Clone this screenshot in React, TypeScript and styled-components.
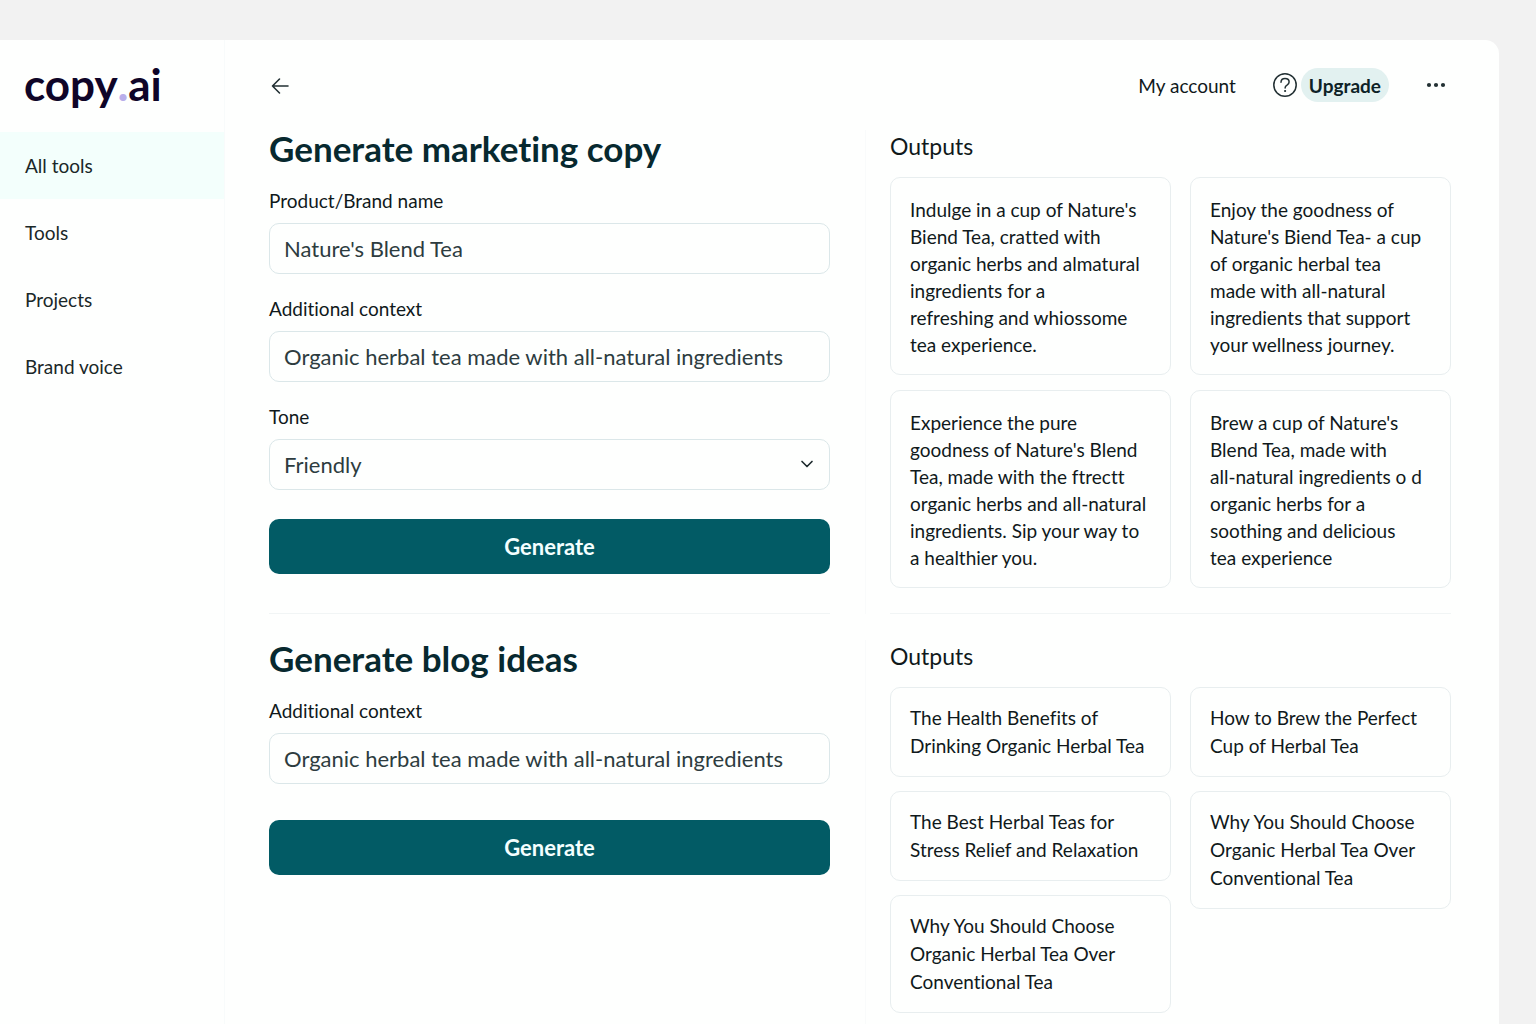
import React from "react";
import styled, { createGlobalStyle } from "styled-components";
import { ChevronDown } from "lucide-react";

const GlobalStyle = createGlobalStyle`
  *, *::before, *::after { box-sizing: border-box; }
  body {
    margin: 0;
    background: #f2f2f2;
    color: #10191b;
    font-family: Lato, "Liberation Sans", sans-serif;
    font-size: 19px;
    font-variant-ligatures: none;
  }
  button, input, select { font: inherit; color: inherit; }
  h1, h2, h3, p, ul { margin: 0; padding: 0; }
`;

const Page = styled.div`
  min-height: 100vh;
  padding: 40px 37px 0 0;
  display: flex;
`;

const Panel = styled.div`
  flex: 1;
  display: flex;
  background: #fefffe;
  border-radius: 0 14px 0 0;
`;

const Sidebar = styled.aside`
  flex: 0 0 225px;
  border-right: 1px solid #f8fbfb;
`;

const Logo = styled.a`
  display: block;
  height: 92px;
  padding: 16px 0 0 24px;
  color: #0f0528;
  font-size: 44px;
  font-weight: 700;
  line-height: 56px;
  text-decoration: none;
`;

const LogoDot = styled.span`
  color: #b9aeea;
  font-weight: 900;
`;

const NavList = styled.ul`
  list-style: none;
`;

const NavLink = styled.a<{ $active?: boolean }>`
  display: flex;
  align-items: center;
  height: 67px;
  padding-left: 25px;
  background: ${(p) => (p.$active ? "#f3fffc" : "transparent")};
  color: #1a2728;
  text-decoration: none;
`;

const Main = styled.main`
  flex: 1;
  min-width: 0;
  display: flex;
  flex-direction: column;
  padding: 0 48px 0 44px;
`;

const Header = styled.header`
  display: flex;
  align-items: center;
  justify-content: space-between;
  height: 90px;
  padding-right: 5px;
`;

const Actions = styled.div`
  display: flex;
  align-items: center;
  gap: 37px;
`;

const UpgradeGroup = styled.div`
  display: flex;
  align-items: center;
  gap: 4px;
`;

const AccountLink = styled.a`
  color: #10191b;
  text-decoration: none;
`;

const IconButton = styled.button`
  display: flex;
  padding: 0;
  border: 0;
  background: none;
  color: #223033;
  cursor: pointer;
`;

const UpgradeButton = styled.button`
  height: 34px;
  padding: 0 8px;
  min-width: 88px;
  border: 0;
  border-radius: 17px;
  background: #e2f1f0;
  color: #0d2226;
  font-weight: 700;
  cursor: pointer;
`;

const Section = styled.section<{ $follows?: boolean }>`
  display: flex;
  flex: ${(p) => (p.$follows ? "1 0 auto" : "0 0 auto")};
  padding-top: ${(p) => (p.$follows ? 26 : 0)}px;
`;

const Rule = styled.div`
  flex: 0 0 1px;
  margin: 0 24px 0 35px;
  background: #f9fbfb;
`;

const FormPane = styled.form<{ $ruled?: boolean }>`
  flex: 1 1 0;
  min-width: 0;
  padding-bottom: ${(p) => (p.$ruled ? 39 : 0)}px;
  border-bottom: ${(p) => (p.$ruled ? "1px solid #f1f5f5" : "0")};
`;

const OutputPane = styled.div<{ $ruled?: boolean }>`
  flex: 1 1 0;
  min-width: 0;
  border-bottom: ${(p) => (p.$ruled ? "1px solid #f1f5f5" : "0")};
`;

const Title = styled.h1`
  margin-bottom: 23px;
  color: #07292f;
  font-size: 35px;
  font-weight: 700;
  line-height: 36px;
`;

const Field = styled.div`
  display: flex;
  flex-direction: column;
  gap: 10px;

  & + & { margin-top: 23px; }
`;

const Label = styled.label`
  line-height: 24px;
`;

const TextInput = styled.input`
  width: 100%;
  height: 51px;
  padding: 0 14px;
  border: 1px solid #dbe7e9;
  border-radius: 10px;
  background: #fefffe;
  color: #2d3c3f;
  font-size: 22px;
`;

const SelectBox = styled.div`
  position: relative;
`;

const Select = styled.select`
  width: 100%;
  height: 51px;
  padding: 0 44px 0 14px;
  border: 1px solid #dbe7e9;
  border-radius: 10px;
  appearance: none;
  background: #fefffe;
  color: #2d3c3f;
  font-size: 22px;
`;

const SelectIcon = styled(ChevronDown)`
  position: absolute;
  top: 15px;
  right: 13px;
  color: #1d2a2d;
  pointer-events: none;
`;

const GenerateButton = styled.button<{ $space: number }>`
  display: block;
  width: 100%;
  height: 55px;
  margin-top: ${(p) => p.$space}px;
  border: 0;
  border-radius: 10px;
  background: #025b65;
  color: #f4ffff;
  font-size: 22px;
  font-weight: 700;
  cursor: pointer;
`;

const OutputsTitle = styled.h2`
  margin-bottom: 15px;
  font-size: 23px;
  font-weight: 400;
  line-height: 32px;
`;

const Columns = styled.div`
  display: grid;
  grid-template-columns: 14fr 13fr;
  align-items: start;
  gap: 19px;
`;

const Stack = styled.div<{ $short?: boolean }>`
  display: grid;
  gap: ${(p) => (p.$short ? 14 : 15)}px;
`;

const Card = styled.p<{ $short?: boolean }>`
  padding: ${(p) => (p.$short ? "16px 19px" : "18px 19px 16px")};
  border: 1px solid #e8eeef;
  border-radius: 10px;
  line-height: ${(p) => (p.$short ? 28 : 27)}px;
  white-space: pre-line;
`;

const navItems = ["All tools", "Tools", "Projects", "Brand voice"];

const copyOutputs = [
  [
    "Indulge in a cup of Nature's\nBiend Tea, cratted with\norganic herbs and almatural\ningredients for a\nrefreshing and whiossome\ntea experience.",
    "Experience the pure\ngoodness of Nature's Blend\nTea, made with the ftrectt\norganic herbs and all-natural\ningredients. Sip your way to\na healthier you.",
  ],
  [
    "Enjoy the goodness of\nNature's Biend Tea- a cup\nof organic herbal tea\nmade with all-natural\ningredients that support\nyour wellness journey.",
    "Brew a cup of Nature's\nBlend Tea, made with\nall-natural ingredients o d\norganic herbs for a\nsoothing and delicious\ntea experience",
  ],
];

const blogOutputs = [
  [
    "The Health Benefits of\nDrinking Organic Herbal Tea",
    "The Best Herbal Teas for\nStress Relief and Relaxation",
    "Why You Should Choose\nOrganic Herbal Tea Over\nConventional Tea",
  ],
  [
    "How to Brew the Perfect\nCup of Herbal Tea",
    "Why You Should Choose\nOrganic Herbal Tea Over\nConventional Tea",
  ],
];

function BackIcon() {
  return (
    <svg width="22" height="22" viewBox="0 0 22 22" fill="none" stroke="currentColor" strokeWidth="1.6" strokeLinecap="round" strokeLinejoin="round" aria-hidden="true">
      <path d="M19 12H3.5M10.5 5l-7 7 7 7" />
    </svg>
  );
}

function HelpIcon() {
  return (
    <svg width="24" height="24" viewBox="0 0 24 24" fill="none" stroke="currentColor" strokeWidth="1.5" strokeLinecap="round" aria-hidden="true">
      <circle cx="12" cy="12" r="11.2" />
      <path d="M8 9.300c.1-2.300 1.700-3.700 4-3.700 2.400 0 4.100 1.400 4.100 3.400 0 1.600-.9 2.400-2.100 3.200-1.300.8-1.900 1.500-1.900 2.900" />
      <circle cx="12.100" cy="18" r="1.100" fill="currentColor" stroke="none" />
    </svg>
  );
}

function MoreIcon() {
  return (
    <svg width="20" height="20" viewBox="0 0 20 20" fill="currentColor" aria-hidden="true">
      <circle cx="3" cy="10" r="2.100" />
      <circle cx="10" cy="10" r="2.100" />
      <circle cx="17" cy="10" r="2.100" />
    </svg>
  );
}

function Outputs({ columns, short, ruled }: { columns: string[][]; short?: boolean; ruled?: boolean }) {
  return (
    <OutputPane $ruled={ruled}>
      <OutputsTitle>Outputs</OutputsTitle>
      <Columns>
        {columns.map((cards, i) => (
          <Stack key={i} $short={short}>
            {cards.map((text) => (
              <Card key={text} $short={short}>{text}</Card>
            ))}
          </Stack>
        ))}
      </Columns>
    </OutputPane>
  );
}

export default function App() {
  return (
    <Page>
      <GlobalStyle />
      <Panel>
        <Sidebar>
          <Logo href="#">copy<LogoDot>.</LogoDot>ai</Logo>
          <nav>
            <NavList>
              {navItems.map((item, i) => (
                <li key={item}>
                  <NavLink href="#" $active={i === 0}>{item}</NavLink>
                </li>
              ))}
            </NavList>
          </nav>
        </Sidebar>
        <Main>
          <Header>
            <IconButton type="button" aria-label="Back"><BackIcon /></IconButton>
            <Actions>
              <AccountLink href="#">My account</AccountLink>
              <UpgradeGroup>
                <IconButton type="button" aria-label="Help"><HelpIcon /></IconButton>
                <UpgradeButton type="button">Upgrade</UpgradeButton>
              </UpgradeGroup>
              <IconButton type="button" aria-label="More options"><MoreIcon /></IconButton>
            </Actions>
          </Header>

          <Section>
            <FormPane $ruled onSubmit={(e) => e.preventDefault()}>
              <Title>Generate marketing copy</Title>
              <Field>
                <Label htmlFor="brand">Product/Brand name</Label>
                <TextInput id="brand" defaultValue="Nature's Blend Tea" />
              </Field>
              <Field>
                <Label htmlFor="copy-context">Additional context</Label>
                <TextInput id="copy-context" defaultValue="Organic herbal tea made with all-natural ingredients" />
              </Field>
              <Field>
                <Label htmlFor="tone">Tone</Label>
                <SelectBox>
                  <Select id="tone" defaultValue="Friendly">
                    <option>Friendly</option>
                  </Select>
                  <SelectIcon size={20} strokeWidth={2} aria-hidden="true" />
                </SelectBox>
              </Field>
              <GenerateButton type="submit" $space={29}>Generate</GenerateButton>
            </FormPane>
            <Rule />
            <Outputs columns={copyOutputs} ruled />
          </Section>

          <Section $follows>
            <FormPane onSubmit={(e) => e.preventDefault()}>
              <Title as="h2">Generate blog ideas</Title>
              <Field>
                <Label htmlFor="blog-context">Additional context</Label>
                <TextInput id="blog-context" defaultValue="Organic herbal tea made with all-natural ingredients" />
              </Field>
              <GenerateButton type="submit" $space={36}>Generate</GenerateButton>
            </FormPane>
            <Rule />
            <Outputs columns={blogOutputs} short />
          </Section>
        </Main>
      </Panel>
    </Page>
  );
}
